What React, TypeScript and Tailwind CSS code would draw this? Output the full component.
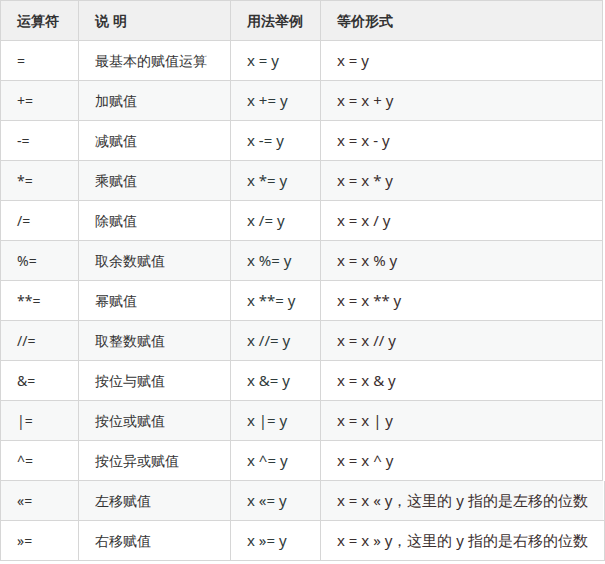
const rows: [string, string, string, string][] = [
  ["=", "最基本的赋值运算", "x = y", "x = y"],
  ["+=", "加赋值", "x += y", "x = x + y"],
  ["-=", "减赋值", "x -= y", "x = x - y"],
  ["*=", "乘赋值", "x *= y", "x = x * y"],
  ["/=", "除赋值", "x /= y", "x = x / y"],
  ["%=", "取余数赋值", "x %= y", "x = x % y"],
  ["**=", "幂赋值", "x **= y", "x = x ** y"],
  ["//=", "取整数赋值", "x //= y", "x = x // y"],
  ["&=", "按位与赋值", "x &= y", "x = x & y"],
  ["|=", "按位或赋值", "x |= y", "x = x | y"],
  ["^=", "按位异或赋值", "x ^= y", "x = x ^ y"],
  ["«=", "左移赋值", "x «= y", "x = x « y，这里的 y 指的是左移的位数"],
  ["»=", "右移赋值", "x »= y", "x = x » y，这里的 y 指的是右移的位数"],
];

const sans = "font-[family-name:'Liberation_Sans','Noto_Sans_CJK_SC',sans-serif]";
const serif = "font-[family-name:'Liberation_Serif','Noto_Sans_CJK_SC',serif]";
const cols = "grid grid-cols-[78px_152px_90px_1fr]";

export default function App() {
  return (
    <div className={`w-[603px] bg-white text-[14px] text-[#333] ${sans}`}>
      <div className="border-l border-t border-[#d6d6d6]">
        <div className={`${cols} h-10 bg-[#f0f0f0] font-bold`}>
          {["运算符", "说 明", "用法举例", "等价形式"].map((h) => (
            <div key={h} className="flex items-center px-4 border-r border-b border-[#d6d6d6]">{h}</div>
          ))}
        </div>
        {rows.map((r, i) => (
          <div key={i} className={`${cols} h-10 ${i % 2 ? "bg-[#f7f8f8]" : "bg-white"}`}>
            <div className="flex items-center px-4 border-r border-b border-[#d6d6d6]">{r[0]}</div>
            <div className="flex items-center px-4 border-r border-b border-[#d6d6d6]">{r[1]}</div>
            <div className={`flex items-center px-4 border-r border-b border-[#d6d6d6] text-[15px] text-[#2f3b3b] ${serif}`}>{r[2]}</div>
            <div className={`flex items-center px-4 border-r border-b border-[#d6d6d6] text-[15px] text-[#3b2f2f] whitespace-nowrap ${serif}`}>{r[3]}</div>
          </div>
        ))}
      </div>
    </div>
  );
}
